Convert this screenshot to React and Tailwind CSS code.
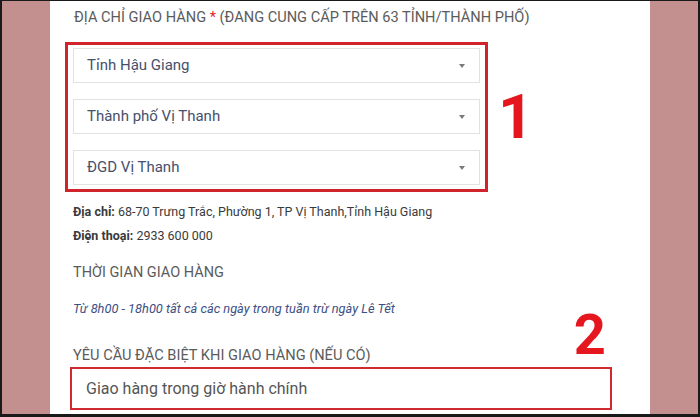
import React from "react";

function Select({ label }) {
  return (
    <div className="flex h-[35px] items-center justify-between border border-[#e2e2e2] bg-white pl-[13px] pr-[14px]">
      <span className="text-[15px] text-[#45506c]">{label}</span>
      <span className="h-0 w-0 border-x-[3.5px] border-t-[4px] border-x-transparent border-t-[#7a7a7a]"></span>
    </div>
  );
}

export default function App() {
  return (
    <div
      className="flex h-[417px] w-[700px] overflow-hidden border-b-[3px] border-l-[2px] border-r-[2px] border-t-[1px] border-[#1a1a1a] bg-[#c48f8f]"
      style={{ fontFamily: "Roboto, 'Noto Sans', sans-serif" }}
    >
      <div className="w-[48px] shrink-0 bg-[#c48f8f]"></div>
      <div className="relative flex w-[600px] shrink-0 flex-col bg-white pl-[15px]">
        <div className="ml-[9px] mt-[6px] text-[14.6px] leading-[20px] text-[#5b5b5b]">
          ĐỊA CHỈ GIAO HÀNG <span className="text-[#e0262d]">*</span> (ĐANG CUNG CẤP TRÊN 63 TỈNH/THÀNH PHỐ)
        </div>
        <div className="mt-[15px] flex items-center">
          <div className="flex w-[423px] flex-col gap-[16px] border-[3px] border-[#d1232b] px-[5px] pb-[4px] pt-[3px]">
            <Select label="Tỉnh Hậu Giang" />
            <Select label="Thành phố Vị Thanh" />
            <Select label="ĐGD Vị Thanh" />
          </div>
          <div className="ml-[10px] text-[62px] font-bold leading-none text-[#e5161d]">1</div>
        </div>
        <div className="ml-[8px] mt-[8px] text-[12.5px] leading-[24px] text-[#3a3a3a]">
          <div>
            <span className="font-bold">Địa chỉ:</span> 68-70 Trưng Trắc, Phường 1, TP Vị Thanh,Tỉnh Hậu Giang
          </div>
          <div>
            <span className="font-bold">Điện thoại:</span> 2933 600 000
          </div>
        </div>
        <div className="ml-[8px] mt-[15px] text-[14.5px] leading-[20px] text-[#5b5b5b]">THỜI GIAN GIAO HÀNG</div>
        <div className="ml-[8px] mt-[16px] text-[12.8px] italic leading-[20px] text-[#3c4f86]">
          Từ 8h00 - 18h00 tất cả các ngày trong tuần trừ ngày Lê Tết
        </div>
        <div className="ml-[8px] mt-[26px] text-[14.6px] leading-[20px] text-[#5b5b5b]">
          YÊU CẦU ĐẶC BIỆT KHI GIAO HÀNG (NẾU CÓ)
        </div>
        <div className="ml-[5px] mt-[2px] flex h-[43px] w-[542px] items-center border-2 border-[#cf2a2f] pl-[14px]">
          <span className="text-[16px] text-[#555555]">Giao hàng trong giờ hành chính</span>
        </div>
        <div className="absolute right-[44px] top-[306px] text-[56px] font-bold leading-none text-[#e5161d]">2</div>
      </div>
      <div className="flex-1 bg-[#c48f8f]"></div>
    </div>
  );
}
